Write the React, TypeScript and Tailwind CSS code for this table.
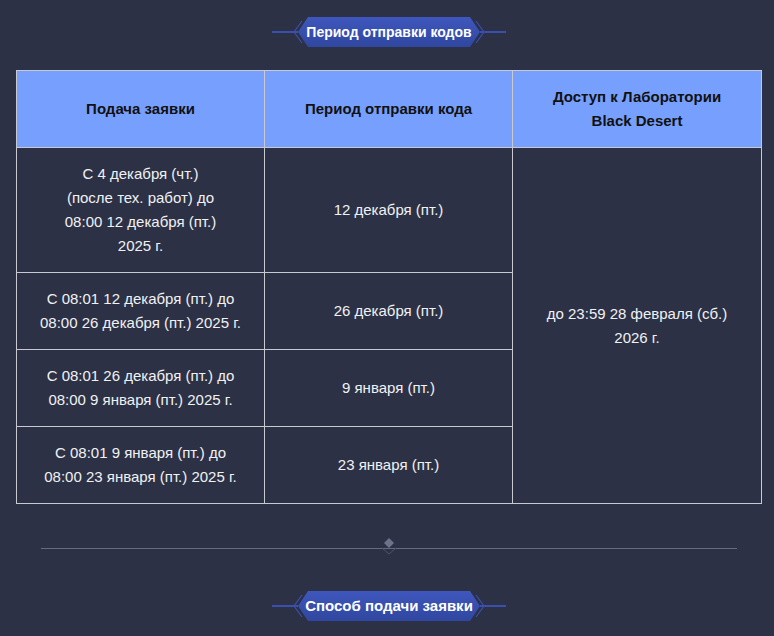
const font = { fontFamily: '"Liberation Sans", Arial, sans-serif' };

const SectionTitle = ({ title, big }: { title: string; big?: boolean }) => {
	return (
		<div className="flex justify-center">
			<div className="relative w-[234px] h-8 flex items-center justify-center">
				<svg className="absolute inset-0" width="234" height="32" viewBox="0 0 234 32">
					<defs>
						<linearGradient id={`g-${title.length}`} x1="0" y1="0" x2="0" y2="1">
							<stop offset="0" stopColor="#3f57bd" />
							<stop offset="1" stopColor="#2f479f" />
						</linearGradient>
					</defs>
					<line x1="0" y1="16" x2="26" y2="16" stroke="#3a4fae" strokeWidth="2" />
					<line x1="208" y1="16" x2="234" y2="16" stroke="#3a4fae" strokeWidth="2" />
					<polyline points="30,5 22,16 30,27" fill="none" stroke="#3a4fae" strokeWidth="1.2" />
					<polyline points="204,5 212,16 204,27" fill="none" stroke="#3a4fae" strokeWidth="1.2" />
					<polygon
						points="36,1 198,1 208,16 198,31 36,31 26,16"
						fill={`url(#g-${title.length})`}
					/>
				</svg>
				<span className={`relative text-white font-bold ${big ? 'text-[15px]' : 'text-[14px]'}`}>{title}</span>
			</div>
		</div>
	);
};

const Divider = () => {
	return (
		<div className="relative mx-[25px] h-px bg-[#666a80]">
			<svg
				className="absolute left-1/2 -translate-x-1/2 -top-[10px]"
				width="16"
				height="18"
				viewBox="0 0 16 18"
			>
				<polygon points="8,0 13,5 8,10 3,5" fill="#6e7189" />
				<polyline points="1,10 8,16 15,10" fill="none" stroke="#4f5369" strokeWidth="1" />
			</svg>
		</div>
	);
};

const rows = [
	{
		apply: ['С 4 декабря (чт.)', '(после тех. работ) до', '08:00 12 декабря (пт.)', '2025 г.'],
		send: '12 декабря (пт.)',
	},
	{
		apply: ['С 08:01 12 декабря (пт.) до', '08:00 26 декабря (пт.) 2025 г.'],
		send: '26 декабря (пт.)',
	},
	{
		apply: ['С 08:01 26 декабря (пт.) до', '08:00 9 января (пт.) 2025 г.'],
		send: '9 января (пт.)',
	},
	{
		apply: ['С 08:01 9 января (пт.) до', '08:00 23 января (пт.) 2025 г.'],
		send: '23 января (пт.)',
	},
];

const cell = 'border border-[#c9cad1] px-2 py-[14px] text-center align-middle';

const App = () => {
	return (
		<div className="min-h-screen bg-[#2c3146] pl-4 pr-3 pt-4 pb-6 text-[15px] leading-6" style={font}>
			<SectionTitle title="Период отправки кодов" />

			<table className="mt-[22px] w-full table-fixed border-collapse">
				<thead>
					<tr className="bg-[#77a0fe] text-[#111] font-bold">
						<th className={`${cell} w-[248px]`}>Подача заявки</th>
						<th className={`${cell} w-[248px]`}>Период отправки кода</th>
						<th className={cell}>
							Доступ к Лаборатории
							<br />
							Black Desert
						</th>
					</tr>
				</thead>
				<tbody className="text-[#f1f1f3]">
					{rows.map((row, i) => (
						<tr key={i}>
							<td className={cell}>
								{row.apply.map((line, j) => (
									<div key={j}>{line}</div>
								))}
							</td>
							<td className={cell}>{row.send}</td>
							{i === 0 && (
								<td className={cell} rowSpan={4}>
									до 23:59 28 февраля (сб.)
									<br />
									2026 г.
								</td>
							)}
						</tr>
					))}
				</tbody>
			</table>

			<div className="mt-[44px]">
				<Divider />
			</div>

			<div className="mt-[41px]">
				<SectionTitle title="Способ подачи заявки" big />
			</div>
		</div>
	);
};

export default App;
